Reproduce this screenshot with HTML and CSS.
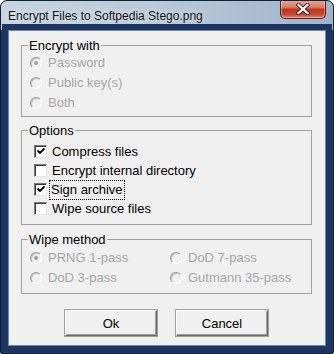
FILE: index.html
```html
<!DOCTYPE html>
<html lang="en">
<head>
  <meta charset="UTF-8" />
  <title>Encrypt Files to Softpedia Stego.png</title>
  <link rel="stylesheet" href="styles.css">
</head>
<body>
  <div class="window">
    <div class="titlebar">
      <span class="title">Encrypt Files to Softpedia Stego.png</span>
      <button class="close" title="Close">
        <svg width="14" height="12" viewBox="0 0 14 12">
          <path d="M2.5 2 L11.5 10 M11.5 2 L2.5 10" stroke="#3b2420" stroke-width="4" stroke-linecap="square" fill="none"/>
          <path d="M2.5 2 L11.5 10 M11.5 2 L2.5 10" stroke="#fff" stroke-width="2.2" stroke-linecap="square" fill="none"/>
        </svg>
      </button>
    </div>

    <div class="client">
      <fieldset class="group group-encrypt">
        <legend>Encrypt with</legend>
        <label class="opt disabled"><span class="radio checked"></span>Password</label>
        <label class="opt disabled"><span class="radio"></span>Public key(s)</label>
        <label class="opt disabled"><span class="radio"></span>Both</label>
      </fieldset>

      <fieldset class="group group-options">
        <legend>Options</legend>
        <label class="opt"><span class="check checked"></span>Compress files</label>
        <label class="opt"><span class="check"></span>Encrypt internal directory</label>
        <label class="opt"><span class="check checked"></span><span class="focus">Sign archive</span></label>
        <label class="opt"><span class="check"></span>Wipe source files</label>
      </fieldset>

      <fieldset class="group group-wipe">
        <legend>Wipe method</legend>
        <div class="wipe-grid">
          <label class="opt disabled"><span class="radio checked"></span>PRNG 1-pass</label>
          <label class="opt disabled"><span class="radio"></span>DoD 7-pass</label>
          <label class="opt disabled"><span class="radio"></span>DoD 3-pass</label>
          <label class="opt disabled"><span class="radio"></span>Gutmann 35-pass</label>
        </div>
      </fieldset>

      <div class="buttons">
        <button class="btn">Ok</button>
        <button class="btn">Cancel</button>
      </div>
    </div>
  </div>
</body>
</html>
```

FILE: styles.css
```css
html, body {
  margin: 0;
  padding: 0;
  background: #fff;
}
.window {
  width: 334px;
  height: 354px;
  box-sizing: border-box;
  border: 1px solid #142238;
  border-radius: 7px 7px 2px 2px;
  background: #1c3561;
  display: flex;
  flex-direction: column;
  font-family: "Liberation Sans", Arial, sans-serif;
  overflow: hidden;
}
.titlebar {
  height: 29px;
  flex-shrink: 0;
  display: flex;
  justify-content: space-between;
  align-items: flex-start;
  padding: 0 7px;
  background: linear-gradient(to right, #c7d4e2, #b9c9da 45%, #9fb3ca 100%);
}
.title {
  margin-top: 7px;
  font-size: 12px;
  line-height: 16px;
  color: #141414;
  text-shadow: 0 0 6px rgba(255,255,255,0.9);
}
.close {
  width: 46px;
  height: 19px;
  margin-top: -1px;
  padding: 0;
  border: 1px solid #5a2219;
  border-top: none;
  border-radius: 0 0 5px 5px;
  background: linear-gradient(to bottom, #e8a496 0, #d7806c 40%, #c0381f 52%, #c44a32 80%, #dc8470 100%);
  box-shadow: inset 0 0 0 1px rgba(255,255,255,0.35);
  display: flex;
  align-items: center;
  justify-content: center;
}
.client {
  width: 318px;
  margin: 0 auto;
  height: 316px;
  flex-shrink: 0;
  box-sizing: border-box;
  background: #f0f0f0;
  border: 1px solid #6f8bb0;
  outline: 6px solid #1c3561;
  padding: 7px 13px 0 12px;
  font-size: 13px;
  color: #000;
}
.group {
  margin: 0;
  padding: 0;
  border: 1px solid #a0a0a0;
  min-width: 0;
}
.group legend {
  margin-left: 6px;
  padding: 0 1px;
  line-height: 15px;
  font-size: 13px;
}
.group-encrypt {
  padding-bottom: 3px;
}
.group-options {
  margin-top: 6px;
  padding-top: 4px;
  padding-bottom: 6px;
}
.group-wipe {
  margin-top: 7px;
  padding-top: 1px;
  padding-bottom: 5px;
}
.opt {
  display: flex;
  align-items: center;
  height: 20px;
  line-height: 16px;
  white-space: nowrap;
}
.group-options .opt {
  height: 19px;
}
.disabled {
  color: #a6a6a6;
}
.radio {
  width: 10px;
  height: 10px;
  margin: 0 6px 0 8px;
  border-radius: 50%;
  border: 1px solid;
  border-color: #9a9a9a #ffffff #ffffff #9a9a9a;
  background: #f0f0f0;
  box-shadow: inset 1px 1px 0 #c4c4c4;
  display: flex;
  align-items: center;
  justify-content: center;
  flex-shrink: 0;
}
.radio.checked::after {
  content: "";
  width: 4px;
  height: 4px;
  border-radius: 50%;
  background: #a0a0a0;
}
.check {
  width: 11px;
  height: 11px;
  margin: 0 5px 0 12px;
  border: 1px solid;
  border-color: #7a7a7a #e6e6e6 #e6e6e6 #7a7a7a;
  box-shadow: inset 1px 1px 0 #3c3c3c;
  background: #fff;
  flex-shrink: 0;
  position: relative;
}
.check.checked::after {
  content: "";
  position: absolute;
  left: 2px;
  top: 1px;
  width: 8px;
  height: 8px;
  background: url("data:image/svg+xml,%3Csvg xmlns='http://www.w3.org/2000/svg' width='8' height='8' viewBox='0 0 8 8'%3E%3Cpath d='M0.5 3.5 L3 6 L7.5 1.5' stroke='%23000' stroke-width='1.8' fill='none'/%3E%3C/svg%3E") no-repeat;
}
.focus {
  outline: 1px dotted #000;
  outline-offset: 0;
  padding: 1px;
  margin-left: -2px;
}
.wipe-grid {
  display: grid;
  grid-template-columns: 140px 1fr;
}
.buttons {
  display: flex;
  justify-content: center;
  gap: 19px;
  margin-top: 16px;
}
.btn {
  width: 92px;
  height: 26px;
  font-family: "Liberation Sans", Arial, sans-serif;
  font-size: 13px;
  color: #000;
  background: #f0f0f0;
  border: 1px solid;
  border-color: #ffffff #696969 #696969 #ffffff;
  box-shadow: inset -1px -1px 0 #a0a0a0, 0 0 0 1px #a0a0a0;
  padding: 0;
}
```
